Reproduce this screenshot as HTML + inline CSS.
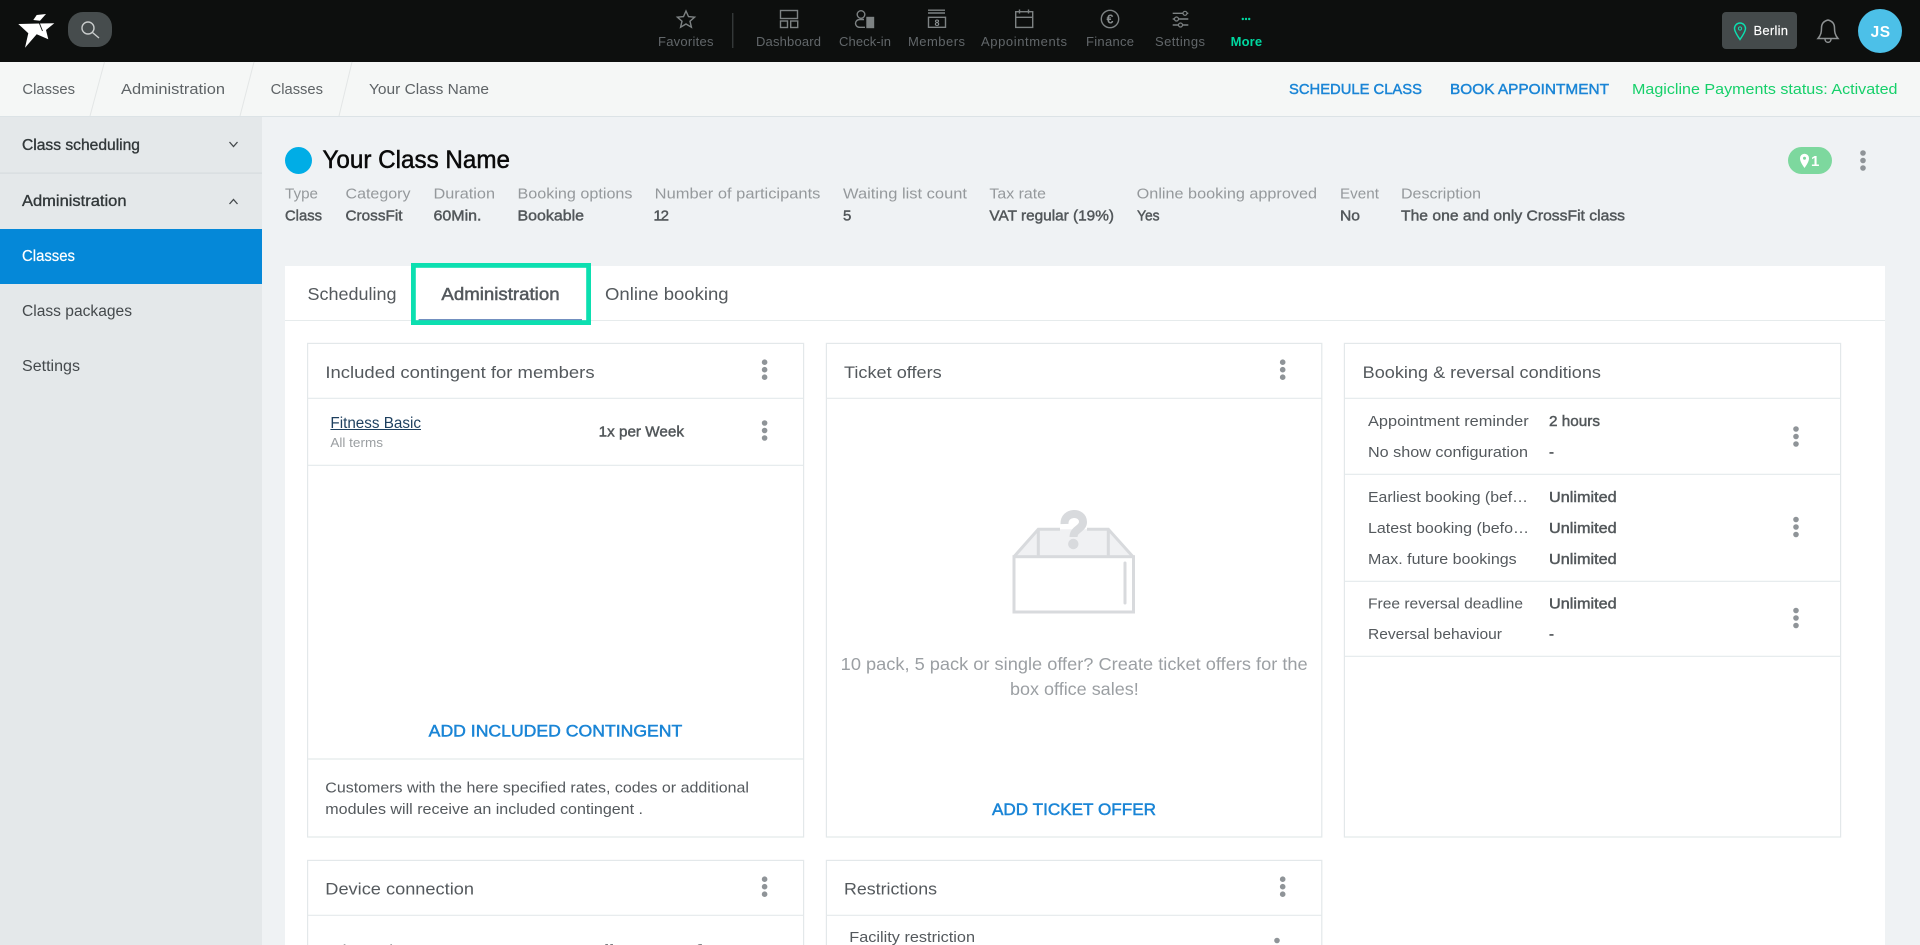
<!DOCTYPE html>
<html lang="en"><head><meta charset="utf-8"><title>Your Class Name</title>
<style>
html,body{margin:0;padding:0;width:1920px;height:945px;overflow:hidden;background:#eff2f4}
svg{display:block;font-family:"Liberation Sans",sans-serif}
.nav{font-size:13px;fill:#62676a}
.bc{font-size:15px;fill:#5e6366}
.act{font-size:15px;fill:#1a85d6;stroke:#1a85d6;stroke-width:.45}
.sb{font-size:15.5px;fill:#32383a;stroke:#32383a;stroke-width:.35}
.sn{font-size:15.5px;fill:#44494c}
.l{font-size:15px;fill:#95999c}
.v{font-size:15px;fill:#52575a;stroke:#52575a;stroke-width:.45}
.ct{font-size:17px;fill:#54595d}
.rl{font-size:15px;fill:#54595d}
.add{font-size:17px;fill:#1a85d6;stroke:#1a85d6;stroke-width:.5}
.card{fill:#fff;stroke:#e3e8ea;stroke-width:1.2}
.ln{stroke:#e4e9eb;stroke-width:1.2}
.ic{fill:none;stroke:#7d8283;stroke-width:1.4}
</style></head><body>
<svg width="1920" height="945" viewBox="0 0 1920 945" xmlns="http://www.w3.org/2000/svg">
<defs><g id="k" fill="#8f9498"><circle cx="0" cy="-7.5" r="2.8"/><circle cx="0" cy="0" r="2.8"/><circle cx="0" cy="7.5" r="2.8"/></g></defs>

<!-- backgrounds -->
<rect width="1920" height="945" fill="#eff2f4"/>
<rect y="62" width="1920" height="54" fill="#f5f7f6"/>
<rect y="116" width="1920" height="1" fill="#dce3e6"/>
<rect y="117" width="262" height="828" fill="#e4e8ea"/>
<rect y="0" width="1920" height="62" fill="#0d0f0e"/>

<!-- logo + search -->
<polygon points="18.3,24 39.3,23.5 54.3,23.3 46,30 48.3,39.3 36.7,34.3 25,47.7 28.3,33.3" fill="#fff"/>
<polygon points="33.3,20 36.7,15 46,14 40,20.7" fill="#fff"/>
<path d="M39.3 23 L42.5 31" stroke="#0d0f0e" stroke-width=".9"/>
<rect x="68" y="12" width="44" height="35" rx="15" fill="#464c4d"/>
<circle cx="88" cy="28" r="6" fill="none" stroke="#c9cccc" stroke-width="1.4"/>
<path d="M92.5 32.5 L99 38" stroke="#c9cccc" stroke-width="1.4"/>

<!-- nav -->
<polygon class="ic" points="686,11 688.5,16.6 694.6,17.2 690,21.2 691.4,27.2 686,24 680.6,27.2 682,21.2 677.4,17.2 683.5,16.6"/>
<rect x="732.3" y="13" width="1" height="35" fill="#44494a"/>
<g class="ic">
<rect x="780.5" y="10.5" width="17" height="8"/><rect x="780.5" y="21" width="7" height="6.5"/><rect x="790.7" y="21" width="7" height="6.5"/>
<circle cx="861" cy="14.5" r="3.8"/><path d="M865 27.3 H860 C854 27.3 854 19.5 860 19.5 H864"/><rect x="867" y="17.5" width="6.5" height="10" fill="#7d8283"/>
<path d="M928 10.2 H945 M928 13 H945"/><rect x="928.5" y="17.3" width="17" height="10"/>
<rect x="1015.7" y="11.7" width="17" height="15.7"/><path d="M1015.7 17.3 H1032.7 M1019.5 9.5 V13.5 M1028.5 9.5 V13.5"/>
<circle cx="1110" cy="19" r="8.7"/>
<path d="M1172.7 13.3 H1188.3 M1172.7 19 H1188.3 M1172.7 25 H1188.3"/>
</g>
<g fill="#0d0f0e" stroke="#7d8283" stroke-width="1.2"><circle cx="1185" cy="13.3" r="2"/><circle cx="1176.5" cy="19" r="2"/><circle cx="1180.5" cy="25" r="2"/></g>
<text x="937" y="26" font-size="9" font-weight="700" text-anchor="middle" fill="#8a8f90">8</text>
<text x="1110" y="23.5" font-size="12.5" font-weight="700" text-anchor="middle" fill="#8a8f90">€</text>
<g fill="#00d8a0"><circle cx="1242.8" cy="19" r="1.2"/><circle cx="1246" cy="19" r="1.2"/><circle cx="1249.2" cy="19" r="1.2"/></g>
<text class="nav" x="658" y="46" textLength="55.5">Favorites</text>
<text class="nav" x="756" y="46" textLength="65">Dashboard</text>
<text class="nav" x="839" y="46" textLength="52">Check-in</text>
<text class="nav" x="908" y="46" textLength="57">Members</text>
<text class="nav" x="981" y="46" textLength="86">Appointments</text>
<text class="nav" x="1086" y="46" textLength="48">Finance</text>
<text class="nav" x="1155" y="46" textLength="50">Settings</text>
<text class="nav" x="1230.6" y="46" textLength="31.5" style="fill:#00d8a0;font-weight:700">More</text>

<!-- top right -->
<rect x="1722" y="12" width="75" height="37" rx="4" fill="#444a4b"/>
<path d="M1740 39.5 C1735.5 33 1734.5 30.5 1734.5 28.5 A5.5 5.5 0 0 1 1745.5 28.5 C1745.5 30.5 1744.5 33 1740 39.5 Z" fill="none" stroke="#0cdfb0" stroke-width="1.4"/>
<circle cx="1740" cy="28.5" r="1.6" fill="none" stroke="#0cdfb0" stroke-width="1"/>
<text x="1753.5" y="35" font-size="13" fill="#fff" stroke="#fff" stroke-width=".15" textLength="34.5">Berlin</text>
<path d="M1818 38.5 H1838 C1835 35 1834.5 32 1834.5 28 C1834.5 23.5 1832 21 1828 20 C1824 21 1821.5 23.5 1821.5 28 C1821.5 32 1821 35 1818 38.5 Z M1825 39 C1825 43.5 1831 43.5 1831 39" fill="none" stroke="#8d9192" stroke-width="1.5"/>
<circle cx="1880" cy="31" r="22" fill="#4cc0e8"/>
<text x="1870.6" y="37" font-size="15.5" font-weight="700" fill="#fff" textLength="19.5">JS</text>

<!-- breadcrumb -->
<path d="M104.5 62 L90 116 M254 62 L240 116 M352 62 L339 116" stroke="#e3e6e6" stroke-width="1"/>
<text class="bc" x="22.4" y="94" textLength="52.6" lengthAdjust="spacingAndGlyphs">Classes</text>
<text class="bc" x="121" y="94" textLength="104" lengthAdjust="spacingAndGlyphs">Administration</text>
<text class="bc" x="270.6" y="94" textLength="52.4" lengthAdjust="spacingAndGlyphs">Classes</text>
<text class="bc" x="369" y="94" textLength="120" lengthAdjust="spacingAndGlyphs">Your Class Name</text>
<text class="act" x="1289" y="94" textLength="133" lengthAdjust="spacingAndGlyphs">SCHEDULE CLASS</text>
<text class="act" x="1450" y="94" textLength="159" lengthAdjust="spacingAndGlyphs">BOOK APPOINTMENT</text>
<text x="1632" y="94" font-size="15" fill="#16d06a" textLength="265.5" lengthAdjust="spacingAndGlyphs">Magicline Payments status: Activated</text>

<!-- sidebar -->
<text class="sb" x="22" y="150" textLength="118" lengthAdjust="spacingAndGlyphs">Class scheduling</text>
<path d="M229.5 142 L233.5 146.5 L237.5 142" fill="none" stroke="#44494c" stroke-width="1.3"/>
<rect y="172.5" width="262" height="1.2" fill="#d6dbde"/>
<text class="sb" x="22" y="206" textLength="104.5" lengthAdjust="spacingAndGlyphs">Administration</text>
<path d="M229.5 204 L233.5 199.5 L237.5 204" fill="none" stroke="#44494c" stroke-width="1.3"/>
<rect y="229" width="262" height="55" fill="#0588d8"/>
<text x="22" y="261" font-size="15.5" fill="#fff" stroke="#fff" stroke-width=".2" textLength="53" lengthAdjust="spacingAndGlyphs">Classes</text>
<text class="sn" x="22" y="316" textLength="110" lengthAdjust="spacingAndGlyphs">Class packages</text>
<text class="sn" x="22" y="371" textLength="58" lengthAdjust="spacingAndGlyphs">Settings</text>

<!-- page header -->
<circle cx="298.5" cy="160.5" r="13.5" fill="#00ade6"/>
<text x="322.5" y="168" font-size="25" fill="#0a0a0a" stroke="#0a0a0a" stroke-width=".5" textLength="187.5" lengthAdjust="spacingAndGlyphs">Your Class Name</text>
<rect x="1788" y="147" width="44" height="27" rx="13.5" fill="#7dd89e"/>
<path d="M1804.5 168 C1801 163 1800 160.5 1800 158.2 A4.5 4.5 0 0 1 1809 158.2 C1809 160.5 1808 163 1804.5 168 Z" fill="#fff"/>
<circle cx="1804.5" cy="158.2" r="1.5" fill="#7dd89e"/>
<text x="1811" y="166" font-size="15" font-weight="700" fill="#fff">1</text>
<use href="#k" x="1863" y="160.5"/>

<text class="l" x="285" y="198.5" textLength="33" lengthAdjust="spacingAndGlyphs">Type</text><text class="v" x="285" y="220.6" textLength="37" lengthAdjust="spacingAndGlyphs">Class</text>
<text class="l" x="345.5" y="198.5" textLength="65" lengthAdjust="spacingAndGlyphs">Category</text><text class="v" x="345.5" y="220.6" textLength="57" lengthAdjust="spacingAndGlyphs">CrossFit</text>
<text class="l" x="433.5" y="198.5" textLength="61.5" lengthAdjust="spacingAndGlyphs">Duration</text><text class="v" x="433.5" y="220.6" textLength="48" lengthAdjust="spacingAndGlyphs">60Min.</text>
<text class="l" x="517.5" y="198.5" textLength="115" lengthAdjust="spacingAndGlyphs">Booking options</text><text class="v" x="517.5" y="220.6" textLength="66.5" lengthAdjust="spacingAndGlyphs">Bookable</text>
<text class="l" x="654.7" y="198.5" textLength="165.7" lengthAdjust="spacingAndGlyphs">Number of participants</text><text class="v" x="653.5" y="220.6" textLength="15.5" lengthAdjust="spacing">12</text>
<text class="l" x="843" y="198.5" textLength="124" lengthAdjust="spacingAndGlyphs">Waiting list count</text><text class="v" x="843" y="220.6">5</text>
<text class="l" x="989.4" y="198.5" textLength="56.6" lengthAdjust="spacingAndGlyphs">Tax rate</text><text class="v" x="989.4" y="220.6" textLength="124.6" lengthAdjust="spacingAndGlyphs">VAT regular (19%)</text>
<text class="l" x="1136.7" y="198.5" textLength="180.3" lengthAdjust="spacingAndGlyphs">Online booking approved</text><text class="v" x="1137" y="220.6" textLength="22.6" lengthAdjust="spacingAndGlyphs">Yes</text>
<text class="l" x="1340" y="198.5" textLength="39" lengthAdjust="spacingAndGlyphs">Event</text><text class="v" x="1340" y="220.6" textLength="20" lengthAdjust="spacingAndGlyphs">No</text>
<text class="l" x="1401" y="198.5" textLength="80" lengthAdjust="spacingAndGlyphs">Description</text><text class="v" x="1401" y="220.6" textLength="224" lengthAdjust="spacingAndGlyphs">The one and only CrossFit class</text>

<!-- white panel + tabs -->
<rect x="285" y="266" width="1600" height="679" fill="#fff"/>
<rect x="285" y="320" width="1600" height="1" fill="#e6ebec"/>
<text x="307.5" y="300" font-size="17.5" fill="#54595d" textLength="89" lengthAdjust="spacingAndGlyphs">Scheduling</text>
<text x="441.4" y="300" font-size="17.5" fill="#54595d" stroke="#54595d" stroke-width=".5" textLength="118.2" lengthAdjust="spacingAndGlyphs">Administration</text>
<text x="605" y="300" font-size="17.5" fill="#54595d" textLength="123.6" lengthAdjust="spacingAndGlyphs">Online booking</text>
<rect x="418.6" y="319" width="163.4" height="1.5" fill="#7390c0"/>
<rect x="413.4" y="265.4" width="175.2" height="57.2" fill="none" stroke="#0cdfb0" stroke-width="4.8"/>

<!-- card 1 -->
<rect class="card" x="307.6" y="343.4" width="496" height="493.6"/>
<path class="ln" d="M307.6 398.3 H803.6 M307.6 465.3 H803.6 M307.6 759 H803.6"/>
<text class="ct" x="325.4" y="378" textLength="269.2" lengthAdjust="spacingAndGlyphs">Included contingent for members</text>
<use href="#k" x="764.6" y="369.7"/>
<text x="330.4" y="428" font-size="15.5" fill="#1d3f5e" textLength="90.6" lengthAdjust="spacingAndGlyphs">Fitness Basic</text>
<rect x="330.4" y="429" width="90.6" height="1" fill="#1d3f5e"/>
<text x="330.4" y="447" font-size="13" fill="#9a9ea1" textLength="52.6" lengthAdjust="spacingAndGlyphs">All terms</text>
<text class="v" x="598.6" y="436.7" textLength="85.4" lengthAdjust="spacingAndGlyphs">1x per Week</text>
<use href="#k" x="764.6" y="430.5"/>
<text class="add" x="428.7" y="736.7" textLength="253.6" lengthAdjust="spacingAndGlyphs">ADD INCLUDED CONTINGENT</text>
<text class="rl" x="325.3" y="792.7" textLength="423.7" lengthAdjust="spacingAndGlyphs">Customers with the here specified rates, codes or additional</text>
<text class="rl" x="325.3" y="814" textLength="317.7" lengthAdjust="spacingAndGlyphs">modules will receive an included contingent .</text>

<!-- card 2 -->
<rect class="card" x="826.4" y="343.4" width="495.4" height="493.6"/>
<path class="ln" d="M826.4 398.3 H1321.8"/>
<text class="ct" x="844" y="378" textLength="97.7" lengthAdjust="spacingAndGlyphs">Ticket offers</text>
<use href="#k" x="1282.7" y="369.7"/>
<polygon points="1014,556.7 1038.3,529.3 1108.3,529.3 1133,556.7" fill="#f0f1f3"/>
<path d="M1014 556.7 L1038.3 529.3 H1060 M1087 529.3 H1108.3 L1133 556.7 M1038.3 529.3 V556.7 M1108.3 529.3 V556.7" fill="none" stroke="#d8dadd" stroke-width="3"/>
<rect x="1014" y="556.7" width="119.5" height="55.3" fill="#fff" stroke="#d8dadd" stroke-width="3"/>
<path d="M1125 563 V603" stroke="#d8dadd" stroke-width="3" stroke-linecap="round"/>
<path d="M1064.5 524 C1064 511 1083 511 1083 522 C1083 529 1073.5 529 1073.5 537" fill="none" stroke="#d8dadd" stroke-width="8"/>
<circle cx="1073.3" cy="544" r="5.2" fill="#d8dadd"/>
<text x="840.7" y="670" font-size="17.5" fill="#9b9fa3" textLength="467" lengthAdjust="spacingAndGlyphs">10 pack, 5 pack or single offer? Create ticket offers for the</text>
<text x="1010" y="695" font-size="17.5" fill="#9b9fa3" textLength="128.7" lengthAdjust="spacingAndGlyphs">box office sales!</text>
<text class="add" x="992" y="815" textLength="164" lengthAdjust="spacingAndGlyphs">ADD TICKET OFFER</text>

<!-- card 3 -->
<rect class="card" x="1344.4" y="343.4" width="496.2" height="493.6"/>
<path class="ln" d="M1344.4 398.3 H1840.6 M1344.4 474.3 H1840.6 M1344.4 581.3 H1840.6 M1344.4 656.3 H1840.6"/>
<text class="ct" x="1362.7" y="378" textLength="238.3" lengthAdjust="spacingAndGlyphs">Booking &amp; reversal conditions</text>
<text class="rl" x="1368" y="426" textLength="160.7" lengthAdjust="spacingAndGlyphs">Appointment reminder</text><text class="v" x="1549" y="426" textLength="51" lengthAdjust="spacingAndGlyphs">2 hours</text>
<text class="rl" x="1368" y="457" textLength="160" lengthAdjust="spacingAndGlyphs">No show configuration</text><text class="v" x="1549" y="457">-</text>
<text class="rl" x="1368" y="502" textLength="160" lengthAdjust="spacingAndGlyphs">Earliest booking (bef…</text><text class="v" x="1549" y="502" textLength="67.7" lengthAdjust="spacingAndGlyphs">Unlimited</text>
<text class="rl" x="1368" y="533" textLength="161" lengthAdjust="spacingAndGlyphs">Latest booking (befo…</text><text class="v" x="1549" y="533" textLength="67.7" lengthAdjust="spacingAndGlyphs">Unlimited</text>
<text class="rl" x="1368" y="564" textLength="148.7" lengthAdjust="spacingAndGlyphs">Max. future bookings</text><text class="v" x="1549" y="564" textLength="67.7" lengthAdjust="spacingAndGlyphs">Unlimited</text>
<text class="rl" x="1368" y="608.7" textLength="155" lengthAdjust="spacingAndGlyphs">Free reversal deadline</text><text class="v" x="1549" y="608.7" textLength="67.7" lengthAdjust="spacingAndGlyphs">Unlimited</text>
<text class="rl" x="1368" y="639" textLength="134" lengthAdjust="spacingAndGlyphs">Reversal behaviour</text><text class="v" x="1549" y="639">-</text>
<use href="#k" x="1796" y="436.5"/><use href="#k" x="1796" y="527"/><use href="#k" x="1796" y="618"/>

<!-- bottom cards -->
<rect class="card" x="307.6" y="860.4" width="496" height="100"/>
<path class="ln" d="M307.6 915.3 H803.6"/>
<text class="ct" x="325.3" y="894.5" textLength="148.7" lengthAdjust="spacingAndGlyphs">Device connection</text>
<use href="#k" x="764.6" y="886.7"/>
<text class="rl" x="330" y="955.5" textLength="110" lengthAdjust="spacingAndGlyphs">Alarm time at</text>
<text class="v" x="511.7" y="955.5" textLength="190" lengthAdjust="spacingAndGlyphs">Door to all areas of</text>
<rect class="card" x="826.4" y="860.4" width="495.4" height="100"/>
<path class="ln" d="M826.4 915.3 H1321.8"/>
<text class="ct" x="844" y="894.5" textLength="93" lengthAdjust="spacingAndGlyphs">Restrictions</text>
<use href="#k" x="1282.7" y="886.7"/>
<text class="rl" x="849.3" y="942" textLength="125.7" lengthAdjust="spacingAndGlyphs">Facility restriction</text>
<use href="#k" x="1277" y="948"/>
</svg>
</body></html>
